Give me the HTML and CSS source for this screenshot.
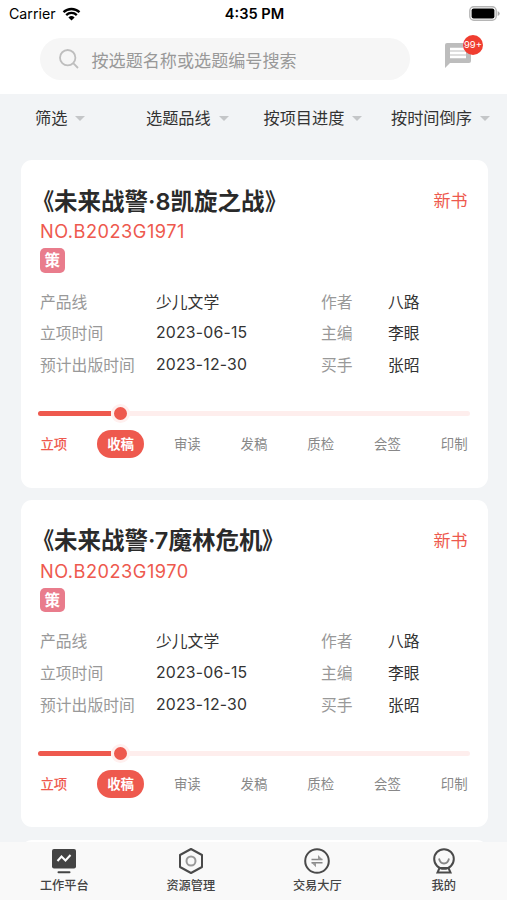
FILE: index.html
```html
<!DOCTYPE html>
<html lang="zh-CN">
<head>
    <meta charset="UTF-8">
    <meta name="viewport" content="width=device-width, initial-scale=1.0">
    <title>工作平台</title>
    <link rel="stylesheet" href="styles.css">
</head>
<body>
    <header class="header">
        <div class="status-bar">
            <div class="carrier">
                <span>Carrier</span>
                <svg class="wifi" viewBox="0 0 18 14" width="19" height="14">
                    <path d="M1 5.2a11.6 11.6 0 0 1 16 0M3.7 8.1a7.6 7.6 0 0 1 10.6 0" fill="none" stroke="#000" stroke-width="2.3"/>
                    <path d="M9 13.6L5.9 10.4a4.5 4.5 0 0 1 6.2 0z"/>
                </svg>
            </div>
            <span class="clock">4:35 PM</span>
            <svg class="battery" viewBox="0 0 31 15" width="31" height="15">
                <rect x=".8" y=".8" width="26.4" height="13.4" rx="4" fill="#fff" stroke="#b5b5b5" stroke-width="1.4"/>
                <rect x="2.6" y="2.6" width="22.8" height="9.8" rx="2"/>
                <path d="M28.7 5v5q2-1 2-2.5t-2-2.5z" fill="#aaa"/>
            </svg>
        </div>
        <div class="search-row">
            <div class="search-box">
                <svg viewBox="0 0 20 20" width="20" height="20" fill="none" stroke="#bebebe" stroke-width="1.8">
                    <circle cx="8.7" cy="8.7" r="7.7"/>
                    <path d="M14.2 14.2l4.8 4.8"/>
                </svg>
                <span>按选题名称或选题编号搜索</span>
            </div>
            <div class="message">
                <svg viewBox="0 0 26 25" width="26" height="25">
                    <path d="M2 0h22a2 2 0 0 1 2 2v16a2 2 0 0 1-2 2H5l-5 5V2a2 2 0 0 1 2-2z" fill="#bdbdbd"/>
                    <path d="M5 6.2h16M5 10h16M5 13.8h16" stroke="#fff" stroke-width="2.8"/>
                </svg>
                <span class="badge">99+</span>
            </div>
        </div>
    </header>

    <nav class="filters">
        <span class="filter">筛选</span>
        <span class="filter">选题品线</span>
        <span class="filter">按项目进度</span>
        <span class="filter">按时间倒序</span>
    </nav>

    <main class="list">
        <article class="card">
            <div class="card-head">
                <h2><span class="open">《</span>未来战警·8凯旋之战<span class="close">》</span></h2>
                <span class="type">新书</span>
            </div>
            <p class="number">NO.B2023G1971</p>
            <span class="tag">策</span>
            <dl class="info">
                <dt>产品线</dt><dd>少儿文学</dd>
                <dt>作者</dt><dd>八路</dd>
                <dt>立项时间</dt><dd class="date">2023-06-15</dd>
                <dt>主编</dt><dd>李眼</dd>
                <dt>预计出版时间</dt><dd class="date">2023-12-30</dd>
                <dt>买手</dt><dd>张昭</dd>
            </dl>
            <div class="track"><div class="done"></div><i class="dot"></i></div>
            <ul class="steps">
                <li class="passed">立项</li>
                <li class="current"><span>收稿</span></li>
                <li>审读</li>
                <li>发稿</li>
                <li>质检</li>
                <li>会签</li>
                <li>印制</li>
            </ul>
        </article>

        <article class="card">
            <div class="card-head">
                <h2><span class="open">《</span>未来战警·7魔林危机<span class="close">》</span></h2>
                <span class="type">新书</span>
            </div>
            <p class="number">NO.B2023G1970</p>
            <span class="tag">策</span>
            <dl class="info">
                <dt>产品线</dt><dd>少儿文学</dd>
                <dt>作者</dt><dd>八路</dd>
                <dt>立项时间</dt><dd class="date">2023-06-15</dd>
                <dt>主编</dt><dd>李眼</dd>
                <dt>预计出版时间</dt><dd class="date">2023-12-30</dd>
                <dt>买手</dt><dd>张昭</dd>
            </dl>
            <div class="track"><div class="done"></div><i class="dot"></i></div>
            <ul class="steps">
                <li class="passed">立项</li>
                <li class="current"><span>收稿</span></li>
                <li>审读</li>
                <li>发稿</li>
                <li>质检</li>
                <li>会签</li>
                <li>印制</li>
            </ul>
        </article>

        <article class="card"></article>
    </main>

    <nav class="tab-bar">
        <a class="tab">
            <svg viewBox="0 0 28 28" width="28" height="28">
                <rect x="2" y="2" width="24" height="19.5" rx="2" fill="#444"/>
                <path d="M7.5 14l4-4.5 4 4 5-5.5" fill="none" stroke="#fff" stroke-width="2"/>
                <path d="M8.5 25.3h11" stroke="#444" stroke-width="2" stroke-linecap="round"/>
            </svg>
            <span>工作平台</span>
        </a>
        <a class="tab">
            <svg viewBox="0 0 28 28" width="28" height="28" fill="none">
                <path d="M14 2l11 6v12l-11 6-11-6V8z" stroke="#4a4a4a" stroke-width="2" stroke-linejoin="round"/>
                <circle cx="14" cy="14" r="4.5" stroke="#999" stroke-width="2"/>
            </svg>
            <span>资源管理</span>
        </a>
        <a class="tab">
            <svg viewBox="0 0 28 28" width="28" height="28" fill="none">
                <circle cx="14" cy="14" r="11.8" stroke="#4a4a4a" stroke-width="2"/>
                <path d="M8.5 12.5h11M8.5 15.8h11" stroke="#888" stroke-width="1.6"/>
                <path d="M15 8l4.5 4.5H15zM13 20.3l-4.500-4.500H13z" fill="#999"/>
            </svg>
            <span>交易大厅</span>
        </a>
        <a class="tab">
            <svg viewBox="0 0 28 28" width="28" height="28" fill="none">
                <circle cx="14" cy="12" r="9.8" stroke="#4a4a4a" stroke-width="2"/>
                <path d="M9 11.5q1 5 5 5t5-5" stroke="#888" stroke-width="1.8"/>
                <path d="M9.5 21h9l2 4.5h-13z" stroke="#4a4a4a" stroke-width="2"/>
            </svg>
            <span>我的</span>
        </a>
    </nav>
</body>
</html>
```
FILE: styles.css
```css
:root {
    --red: #ee594e;
    --page-bg: #f2f4f6;
    --text: #333;
    --muted: #999;
}

* {
    margin: 0;
    padding: 0;
    box-sizing: border-box;
}

body {
    height: 900px;
    display: flex;
    flex-direction: column;
    overflow: hidden;
    background: var(--page-bg);
    color: var(--text);
    font-family: Inter, "Noto Sans CJK SC", sans-serif;
    font-size: 15.8px;
}

svg {
    display: block;
}

.header {
    flex: none;
    height: 94px;
    background: #fff;
}

.status-bar {
    display: grid;
    grid-template-columns: 1fr auto 1fr;
    align-items: center;
    height: 27px;
    padding: 0 7px 0 9px;
    color: #000;
    font-size: 14.2px;
}

.carrier {
    display: flex;
    align-items: center;
    gap: 6px;
}

.clock {
    font-size: 14.6px;
    font-weight: 600;
}

.battery {
    justify-self: end;
}

.search-row {
    display: flex;
    padding: 11px 0 0 40px;
}

.search-box {
    display: flex;
    align-items: center;
    gap: 12.5px;
    width: 370px;
    height: 42px;
    padding-left: 19px;
    border-radius: 21px;
    background: #f6f6f6;
    color: #999;
    font-size: 17.1px;
}

.message {
    position: relative;
    margin: 5px 0 0 35px;
}

.badge {
    position: absolute;
    top: -8px;
    left: 18px;
    width: 20px;
    height: 20px;
    border-radius: 50%;
    background: #f03d30;
    color: #fff;
    font-size: 9.5px;
    line-height: 20px;
    text-align: center;
}

.filters {
    flex: none;
    display: grid;
    grid-template-columns: 111px 117.5px 127.5px auto;
    height: 66px;
    padding-left: 35px;
    font-size: 16.2px;
    line-height: 24px;
}

.filter {
    display: flex;
    align-items: center;
    gap: 8px;
    height: 48px;
}

.filter::after {
    content: "";
    border: 5px solid transparent;
    border-top-color: #c4c6c8;
    border-bottom: 0;
}

.list {
    flex: 1;
    min-height: 0;
    display: flex;
    flex-direction: column;
    gap: 12.3px;
    padding: 0 19.5px 0 20.5px;
    overflow: hidden;
}

.card {
    flex: none;
    height: 327.5px;
    padding-top: 22px;
    border-radius: 11px;
    background: #fff;
}

.card-head {
    display: flex;
    justify-content: space-between;
    align-items: center;
    height: 35px;
    padding: 0 20px 0 10px;
}

.card-head h2 {
    font-size: 23.5px;
    font-weight: 600;
    color: #2a2a2a;
}

/* slightly narrower book-title marks */
.open,
.close {
    display: inline-block;
    transform: scaleX(0.9);
}

.open {
    transform-origin: 90% 50%;
}

.close {
    transform-origin: 0 50%;
}

.type {
    color: var(--red);
    font-size: 17px;
}

.number {
    padding-left: 19.5px;
    color: var(--red);
    font-size: 18.2px;
    letter-spacing: 0.5px;
    line-height: 28px;
}

.tag {
    display: block;
    width: 24.5px;
    height: 24.5px;
    margin: 3px 0 0 19.5px;
    border-radius: 5px;
    background: #e97c8c;
    color: #fff;
    font-size: 15.5px;
    font-weight: 700;
    line-height: 25.5px;
    text-align: center;
}

.info {
    display: grid;
    grid-template-columns: 116px 165px 67px auto;
    margin: 14px 0 0 19.5px;
    line-height: 31.8px;
}

.info dt {
    color: var(--muted);
}

.info .date {
    letter-spacing: 0.2px;
    line-height: 30.8px;
}

.track {
    position: relative;
    height: 5px;
    margin: 29.5px 17.5px 0;
    border-radius: 3px;
    background: #feeeed;
}

.done {
    width: 73px;
    height: 5px;
    border-radius: 3px 0 0 3px;
    background: var(--red);
}

.dot {
    position: absolute;
    top: -7px;
    left: 73px;
    width: 19px;
    height: 19px;
    border: 3px solid #fff0ef;
    border-radius: 50%;
    background: var(--red);
}

.steps {
    display: grid;
    grid-template-columns: repeat(7, 1fr);
    margin-top: 14px;
    list-style: none;
    color: #888;
    font-size: 13.4px;
    line-height: 28px;
    text-align: center;
}

.steps .passed {
    color: var(--red);
    font-weight: 500;
}

.steps .current span {
    display: block;
    width: 47px;
    margin: 0 auto;
    border-radius: 14px;
    background: var(--red);
    color: #fff;
    font-weight: 700;
}

.tab-bar {
    flex: none;
    display: grid;
    grid-template-columns: repeat(4, 1fr);
    height: 58px;
    padding: 4.5px 0 0 1px;
    background: #f9f9f9;
}

.tab {
    display: flex;
    flex-direction: column;
    align-items: center;
    color: #444;
    font-size: 12.2px;
    font-weight: 500;
    line-height: 22px;
}
```
